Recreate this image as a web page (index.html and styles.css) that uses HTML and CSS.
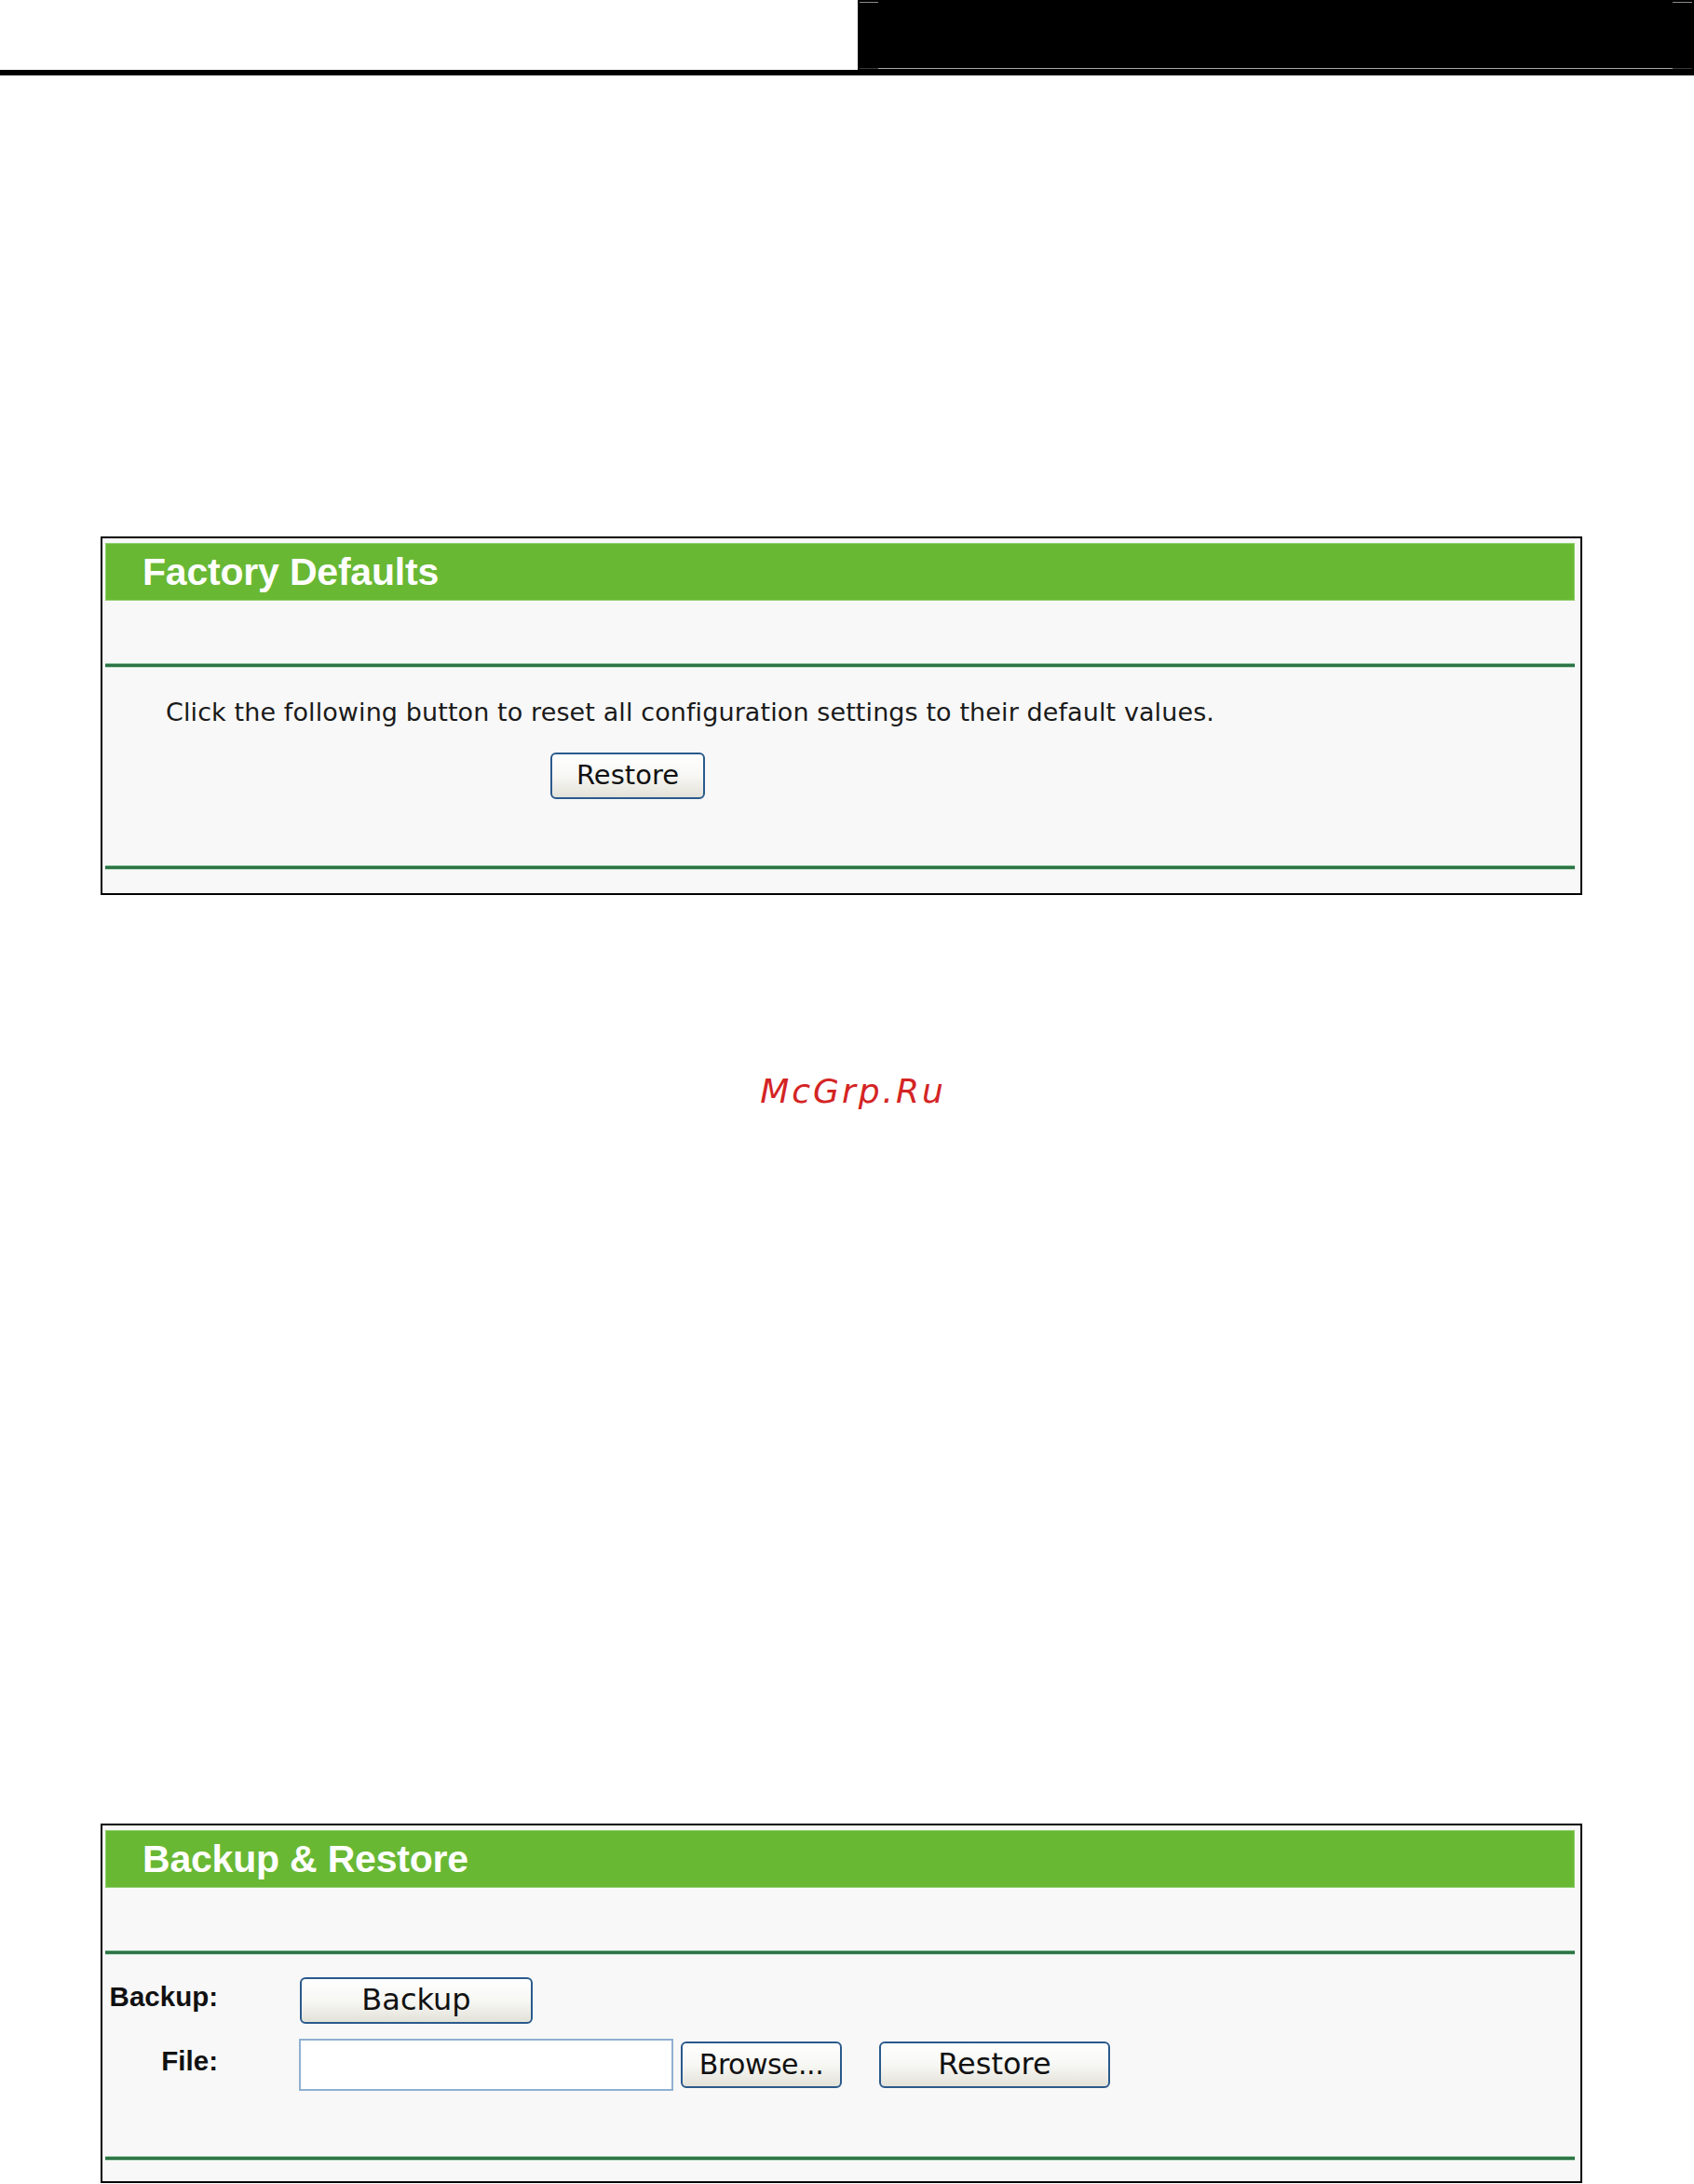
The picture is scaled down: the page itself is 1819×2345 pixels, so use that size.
FILE: index.html
```html
<!DOCTYPE html>
<html lang="en">
<head>
<meta charset="utf-8">
<title>System Tools</title>
<link rel="stylesheet" href="styles.css">
</head>
<body>
  <header class="page-top">
    <div class="page-top__blank"></div>
    <div class="page-top__band">
      <span class="tick tick--tl"></span>
      <span class="tick tick--tr"></span>
      <span class="band-edge"></span>
    </div>
  </header>
  <div class="page-rule"></div>

  <main class="content">
    <section class="panel panel--factory">
      <div class="panel__head">Factory Defaults</div>
      <div class="panel__spacer"></div>
      <div class="panel__line"></div>
      <div class="panel__body factory-body">
        <p class="factory-text">Click the following button to reset all configuration settings to their default values.</p>
        <button class="btn btn--factory" type="button">Restore</button>
      </div>
      <div class="panel__line"></div>
      <div class="panel__foot"></div>
    </section>

    <div class="mark">McGrp.Ru</div>

    <section class="panel panel--backup">
      <div class="panel__head">Backup &amp; Restore</div>
      <div class="panel__spacer"></div>
      <div class="panel__line"></div>
      <div class="panel__body backup-body">
        <div class="form-row form-row--backup">
          <span class="form-label">Backup:</span>
          <button class="btn btn--backup" type="button">Backup</button>
        </div>
        <div class="form-row form-row--file">
          <span class="form-label">File:</span>
          <input class="file-field" type="text" aria-label="File">
          <button class="btn btn--browse" type="button">Browse...</button>
          <button class="btn btn--restore" type="button">Restore</button>
        </div>
      </div>
      <div class="panel__line"></div>
      <div class="panel__foot panel__foot--short"></div>
    </section>
  </main>
</body>
</html>
```

FILE: styles.css
```css
html, body {
  margin: 0;
  padding: 0;
  background: #ffffff;
}

body {
  font-family: "DejaVu Sans", Verdana, sans-serif;
  color: #111111;
}

/* ---------- page header strip ---------- */
.page-top {
  display: flex;
  height: 75px;
}

.page-top__blank {
  flex: 0 0 921px;
  background: #ffffff;
}

.page-top__band {
  flex: 1 1 auto;
  background: #000000;
  position: relative;
}

.tick {
  position: absolute;
  top: 2px;
  height: 1px;
  width: 20px;
  background: #8a8a8a;
}

.tick--tl { left: 2px; }
.tick--tr { right: 2px; width: 21px; }

.band-edge {
  position: absolute;
  left: 2px;
  right: 2px;
  bottom: 1px;
  height: 1px;
  background: linear-gradient(to right,
    #3a3a3a 0, #3a3a3a 20px,
    #a8a8a8 20px, #a8a8a8 calc(100% - 21px),
    #3a3a3a calc(100% - 21px));
}

.page-rule {
  height: 6px;
  background: #000000;
}

/* ---------- content ---------- */
.content {
  padding: 495px 0 0 108px;
}

.panel {
  box-sizing: border-box;
  width: 1591px;
  border: 2px solid #000000;
  background: #f8f8f8;
  padding: 5px 6px 0 3px;
}

.panel__head {
  height: 62px;
  box-sizing: border-box;
  background: #69b834;
  border: 1px solid #8fcf6c;
  padding-left: 39px;
  font-family: "Liberation Sans", Arial, sans-serif;
  font-weight: 700;
  font-size: 41px;
  line-height: 60px;
  color: #ffffff;
  letter-spacing: -0.2px;
}

.panel__spacer {
  height: 68px;
}

.panel__line {
  height: 3px;
  background: #2c7345;
  box-shadow: 0 -1px 0 #8fc39f, 0 1px 0 #b7dbc1;
}

.panel__foot {
  height: 26px;
}

.panel__foot--short {
  height: 23px;
}

/* ---------- factory defaults ---------- */
.factory-body {
  height: 214px;
  box-sizing: border-box;
  padding: 33px 0 0 65px;
}

.factory-text {
  margin: 0;
  font-size: 27px;
  line-height: 32px;
  letter-spacing: 0.1px;
  color: #1a1a1a;
}

/* ---------- buttons ---------- */
.btn {
  display: inline-flex;
  align-items: center;
  justify-content: center;
  box-sizing: border-box;
  height: 50px;
  margin: 0;
  padding: 0 0 2px;
  border: 2px solid #2a5a8c;
  border-radius: 6px;
  background: linear-gradient(to bottom, #ffffff 0%, #f7f7f4 50%, #e3e2d9 100%);
  font-family: "DejaVu Sans", Verdana, sans-serif;
  color: #111111;
  cursor: default;
}

.btn--factory {
  width: 166px;
  margin: 27px 0 0 413px;
  font-size: 29px;
}

.btn--backup {
  width: 250px;
  font-size: 32px;
}

.btn--browse {
  width: 173px;
  margin-left: 8px;
  font-size: 30px;
  letter-spacing: -0.5px;
}

.btn--restore {
  width: 248px;
  margin-left: 40px;
  font-size: 32px;
}

/* ---------- backup & restore ---------- */
.backup-body {
  height: 218px;
  box-sizing: border-box;
  padding-top: 25px;
}

.form-row {
  display: flex;
  align-items: center;
}

.form-row--backup {
  height: 50px;
}

.form-row--file {
  height: 56px;
  margin-top: 16px;
}

.form-label {
  flex: 0 0 121px;
  margin-right: 88px;
  box-sizing: border-box;
  padding-bottom: 8px;
  text-align: right;
  font-family: "Liberation Sans", Arial, sans-serif;
  font-weight: 700;
  font-size: 29.5px;
  line-height: 34px;
  color: #111111;
}

.form-row--file .form-label {
  margin-right: 87px;
}

.file-field {
  box-sizing: border-box;
  width: 402px;
  height: 56px;
  margin: 0;
  padding: 0 6px;
  border: 2px solid #8fb0d0;
  background: #ffffff;
  font-family: "DejaVu Sans", Verdana, sans-serif;
  font-size: 26px;
  outline: none;
  -webkit-appearance: none;
  appearance: none;
}

/* ---------- site mark ---------- */
.mark {
  margin: 191px 0 766px;
  padding-left: 25px;
  width: 1591px;
  box-sizing: border-box;
  text-align: center;
  font-family: "DejaVu Sans", Verdana, sans-serif;
  font-style: italic;
  font-size: 36px;
  line-height: 40px;
  letter-spacing: 3px;
  color: #d42424;
}
```
